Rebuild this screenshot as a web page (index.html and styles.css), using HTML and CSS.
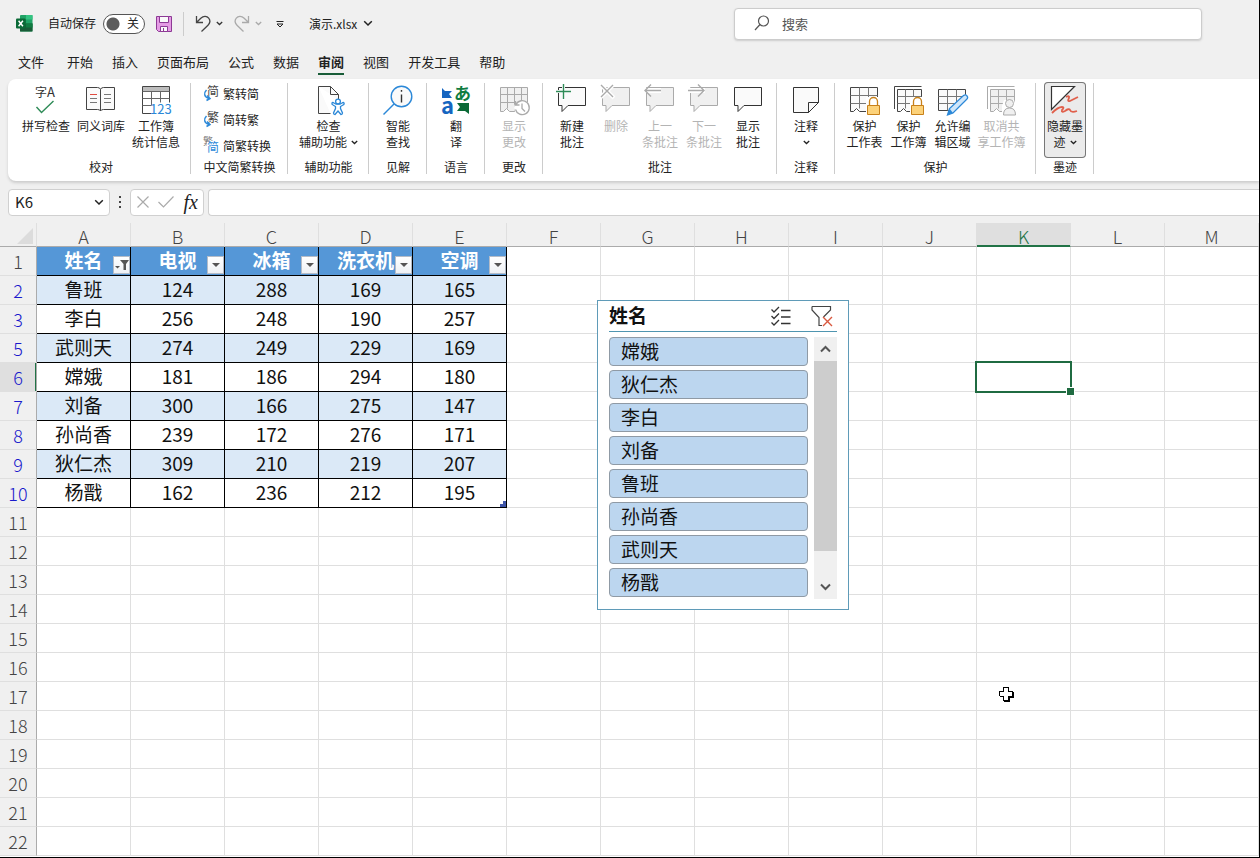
FILE: index.html
```html
<!DOCTYPE html>
<html lang="zh-CN">
<head>
<meta charset="utf-8">
<title>演示.xlsx</title>
<link rel="stylesheet" href="styles.css">
</head>
<body>
<div class="app">
  <header class="titlebar">
    <svg class="logo" width="17" height="17" viewBox="0 0 17 17">
      <rect x="4" y="0" width="12.500" height="16.500" rx="1" fill="#21a366"/><rect x="10" y="0" width="6.500" height="4.500" fill="#33c481"/><rect x="4" y="4.500" width="6" height="4" fill="#107c41"/><rect x="4" y="8.500" width="12.500" height="8" fill="#185c37"/><rect x="10" y="8.500" width="6.500" height="4" fill="#107c41"/><rect x="0" y="3.500" width="9.500" height="10" rx="1" fill="#0b6a37"/>
      <path d="M2.600 5.800l4.300 5.400M6.900 5.800l-4.300 5.400" stroke="#fff" stroke-width="1.500"/>
    </svg>
    <label class="autosave" for="autosave">自动保存</label>
    <span class="switch"><input id="autosave" type="checkbox" role="switch"><span>关</span></span>
    <button class="tool save" aria-label="保存"><svg width="16" height="16" viewBox="0 0 16 16"><path d="M.500.500h15v15H2.500l-2-2z" fill="#e59be5" stroke="#8d3a95"/><path d="M3.500.500h9v6h-9z" fill="#fafafa" stroke="#8d3a95"/><path d="M4.500 15.500v-5h7v5z" fill="#fafafa" stroke="#8d3a95"/><path d="M7.500 12v3" stroke="#8d3a95"/></svg></button>
    <i class="divider"></i>
    <button class="tool undo" aria-label="撤消"><svg width="16" height="18" viewBox="0 0 16 18" fill="none" stroke="#444" stroke-width="1.300"><path d="M1.500 1v6.500H8M1.700 7.300L5.800 3.200C8.500.700 12 1 13.700 3.200c1.800 2.300 1.300 5-.7 7L6.500 16.500"/></svg><svg width="7" height="5" viewBox="0 0 7 5" fill="none" stroke="#333" stroke-width="1.300"><path d="M.800 1l2.700 2.500L6.200 1"/></svg></button>
    <button class="tool redo" aria-label="恢复"><svg width="16" height="18" viewBox="0 0 16 18" fill="none" stroke="#aaa" stroke-width="1.300"><path d="M14.500 1v6.500H8M14.300 7.300l-4.100-4.100C7.500.700 4 1 2.300 3.200c-1.800 2.300-1.300 5 .7 7l6.500 6.300"/></svg><svg width="7" height="5" viewBox="0 0 7 5" fill="none" stroke="#aaa" stroke-width="1.300"><path d="M.800 1l2.700 2.500L6.200 1"/></svg></button>
    <button class="tool more" aria-label="自定义快速访问工具栏"><svg width="8" height="8" viewBox="0 0 8 8" fill="none" stroke="#222"><path d="M.500 1.500h7M1 4h6L4 7z"/></svg></button>
    <button class="tool filename">演示.xlsx<svg width="10" height="7" viewBox="0 0 10 7" fill="none" stroke="#222" stroke-width="1.500"><path d="M1.200 1.200L5 5l3.800-3.800"/></svg></button>
    <div class="search"><svg width="16" height="16" viewBox="0 0 16 16" fill="none" stroke="#555" stroke-width="1.200"><circle cx="9.500" cy="6" r="5"/><path d="M6 9.500L1 15"/></svg><input type="search" placeholder="搜索" aria-label="搜索"></div>
  </header>

  <nav class="tabs">
    <button class="file">文件</button><button>开始</button><button>插入</button><button>页面布局</button><button>公式</button><button>数据</button><button class="active">审阅</button><button>视图</button><button>开发工具</button><button>帮助</button>
  </nav>

  <section class="ribbon">
    <div class="group proof">
      <div class="items">
        <button class="cmd"><svg viewBox="0 0 32 32"><text x="5" y="13" font-size="12" fill="#333">字</text><text x="17" y="13" font-size="13" fill="#333">A</text><path d="M6.500 23l5 5.500L23.500 17" fill="none" stroke="#2e8b57" stroke-width="1.400"/></svg>拼写检查</button>
        <button class="cmd"><svg viewBox="0 0 32 32" fill="none" stroke="#444"><path d="M1.500 3.500h11q2.500 0 3 2 .5-2 3-2h11v22h-11q-2.500 0-3 1.500-.5-1.500-3-1.500h-11zM15.500 5.500V27" fill="#fafafa"/><path d="M5 10.500h7" stroke="#e04b40"/><path d="M5 14.500h7M5 18.500h7M19 10.500h7M19 14.500h7M19 18.500h7" stroke="#777"/></svg>同义词库</button>
        <button class="cmd"><svg viewBox="0 0 32 32" fill="none" stroke="#444"><path d="M2.500 2.500h27v16M2.500 2.500v27h9" /><path d="M3 3h26v4H3z" fill="#bdbdbd" stroke="none"/><path d="M2.500 7.500h27M2.500 14.500h27M2.500 21.500h9M11.500 7.500v14M20.500 7.500v11" stroke="#666"/><text x="10" y="30" font-size="13" fill="#2b88d8" stroke="none">123</text></svg>工作簿<br>统计信息</button>
      </div>
      <h2>校对</h2>
    </div>
    <div class="group chinese">
      <div class="items list">
        <button><svg viewBox="0 0 16 16"><text x="4" y="11" font-size="12" fill="#444">简</text><path d="M3.500 5C.500 8 1 12 6 13.500M4 10.500l3 3-3.500 2" fill="none" stroke="#2b88d8" stroke-width="1.500"/></svg>繁转简</button>
        <button><svg viewBox="0 0 16 16"><text x="4" y="11" font-size="12" fill="#444">繁</text><path d="M3.500 5C.500 8 1 12 6 13.500M4 10.500l3 3-3.500 2" fill="none" stroke="#2b88d8" stroke-width="1.500"/></svg>简转繁</button>
        <button><svg viewBox="0 0 16 16"><text x="0" y="8" font-size="10" fill="#777">繁</text><path d="M4 5h12v11H4z" fill="#fff"/><text x="4" y="15" font-size="12" fill="#2b88d8">简</text></svg>简繁转换</button>
      </div>
      <h2>中文简繁转换</h2>
    </div>
    <div class="group wide">
      <div class="items">
        <button class="cmd"><svg viewBox="0 0 32 32" fill="none" stroke="#444"><path d="M5.500 2.500h12l8 8v5M5.500 2.500v27h12" fill="#fafafa"/><path d="M17.500 2.500v8h8"/><g fill="#fff" stroke="#2b88d8" stroke-width="1.300"><path d="M19 19q.5-1 2 0l2 1h4l2-1q1.500-1 2 0 .5 1.500-1 2l-2.500 1.500v2l2 4.500q0 1.500-1.500 1.500L25 27l-3 3.500q-1.500 0-1.500-1.500l2-4.500v-2L20 21q-1.500-.5-1-2z"/><circle cx="25" cy="17.500" r="2.400"/></g></svg>检查<br><span>辅助功能<svg class="caret" viewBox="0 0 7 5"><path d="M.800 1l2.700 2.500L6.200 1"/></svg></span></button>
      </div>
      <h2>辅助功能</h2>
    </div>
    <div class="group">
      <div class="items">
        <button class="cmd"><svg viewBox="0 0 32 32" fill="none" stroke="#2b88d8" stroke-width="1.400"><circle cx="19.500" cy="12.500" r="10.300" fill="#fafafa"/><path d="M12 20L1.500 30.500"/><path d="M19.500 10.500v8M19.500 6v1.800" stroke="#333"/></svg>智能<br>查找</button>
      </div>
      <h2>见解</h2>
    </div>
    <div class="group">
      <div class="items">
        <button class="cmd"><svg viewBox="0 0 32 32"><path d="M2 4l3 3h7l-3 3 3 4H2z" fill="#1565c0"/><text x="1" y="30" font-size="22" font-weight="700" fill="#1565c0">a</text><text x="14" y="16" font-size="17" font-weight="700" fill="#107c41">あ</text><path d="M29 30l-4-3h-8l3-4-3-4h12z" fill="#0b6a37"/></svg>翻<br>译</button>
      </div>
      <h2>语言</h2>
    </div>
    <div class="group">
      <div class="items">
        <button class="cmd" disabled><svg viewBox="0 0 32 32" fill="none" stroke="#aaa"><path d="M2.500 3.500h27v24h-18l-3-3-3 3h-3z" fill="#f0f0f0"/><path d="M2.500 10.500h27M2.500 18.500h27M9.500 3.500v21M16.500 3.500v24M23.500 3.500v15"/><circle cx="24" cy="24" r="8" fill="#fff" stroke="none"/><path d="M18 20.500a7 7 0 1 1-.5 5M17.500 17v4h4M24 19.500v5l3 3" stroke-width="1.300"/></svg>显示<br>更改</button>
      </div>
      <h2>更改</h2>
    </div>
    <div class="group comments">
      <div class="items">
        <button class="cmd"><svg viewBox="0 0 32 32" fill="#fafafa" stroke="#333"><path d="M2.500 3.500h27v18H12l-6 6v-6H2.500z"/><path d="M7.500 0v16M0 7.500h15" stroke="#fff" stroke-width="3"/><path d="M7.500 0v15M0 7.500h15" stroke="#2e8b57" stroke-width="1.400"/></svg>新建<br>批注</button>
        <button class="cmd" disabled><svg viewBox="0 0 32 32" fill="#f0f0f0" stroke="#aaa"><path d="M2.500 3.500h27v18H12l-6 6v-6H2.500z"/><path d="M0 0l14 14M14 0L0 14" stroke="#fff" stroke-width="4"/><path d="M1 1l12 12M13 1L1 13" stroke-width="1.400"/></svg>删除</button>
        <button class="cmd" disabled><svg viewBox="0 0 32 32" fill="#f0f0f0" stroke="#aaa"><path d="M2.500 3.500h27v18H12l-6 6v-6H2.500z"/><path d="M0 6.500h17" stroke="#fff" stroke-width="5"/><path d="M1 6.500h16M7 .500l-6 6 6 6" fill="none" stroke-width="1.400"/></svg>上一<br>条批注</button>
        <button class="cmd" disabled><svg viewBox="0 0 32 32" fill="#f0f0f0" stroke="#aaa"><path d="M2.500 3.500h27v18H12l-6 6v-6H2.500z"/><path d="M0 6.500h17" stroke="#fff" stroke-width="5"/><path d="M0 6.500h16M10 .500l6 6-6 6" fill="none" stroke-width="1.400"/></svg>下一<br>条批注</button>
        <button class="cmd"><svg viewBox="0 0 32 32" fill="#fafafa" stroke="#333"><path d="M2.500 3.500h27v18H12l-6 6v-6H2.500z"/></svg>显示<br>批注</button>
      </div>
      <h2>批注</h2>
    </div>
    <div class="group">
      <div class="items">
        <button class="cmd"><svg viewBox="0 0 32 32" fill="#fafafa" stroke="#333"><path d="M3.500 3.500h25v15l-10 10h-15z"/><path d="M18.500 28.500v-10h10z"/></svg>注释<br><span><svg class="caret" viewBox="0 0 7 5"><path d="M.800 1l2.700 2.500L6.200 1"/></svg></span></button>
      </div>
      <h2>注释</h2>
    </div>
    <div class="group protect">
      <div class="items">
        <button class="cmd"><svg viewBox="0 0 32 32" fill="none" stroke="#444"><path d="M1.500 3.500h27v24h-18l-3-3-3 3h-3z" fill="#fafafa"/><path d="M1.500 11.500h27M1.500 19.500h27M10.500 3.500v21M19.500 3.500v24" stroke="#777"/><path d="M17 13h14v19H17z" fill="#fff" stroke="none"/><path d="M20.500 21v-3.500a4 4 0 0 1 8 0V21" stroke="#c8811a" stroke-width="1.300"/><path d="M18.500 21.500h12v9h-12z" fill="#fcd27a" stroke="#c8811a"/></svg>保护<br>工作表</button>
        <button class="cmd"><svg viewBox="0 0 32 32" fill="none" stroke="#444"><path d="M1.500 25V2.500h27"/><path d="M4.500 5.500h24v22h-15l-3-3-3 3h-3z" fill="#fafafa"/><path d="M4.500 12.500h24M4.500 19.500h24M12.500 5.500v19M20.500 5.500v22" stroke="#777"/><path d="M17 13h14v19H17z" fill="#fff" stroke="none"/><path d="M20.500 21v-3.500a4 4 0 0 1 8 0V21" stroke="#c8811a" stroke-width="1.300"/><path d="M18.500 21.500h12v9h-12z" fill="#fcd27a" stroke="#c8811a"/></svg>保护<br>工作簿</button>
        <button class="cmd"><svg viewBox="0 0 32 32" fill="none" stroke="#444"><path d="M1.500 5.500h27v21h-27z" fill="#fafafa"/><path d="M1.500 12.500h27M1.500 19.500h27M10.500 5.500v21M19.500 5.500v21" stroke="#777"/><path d="M13 32l2-8 14-13 3 3v18z" fill="#fff" stroke="none"/><path d="M10.500 31l2-6.500 14-13q2.500-1.500 3.500.5 1.500 2-.5 3.500L16 29z" fill="#cfe6fa" stroke="#2b88d8" stroke-width="1.300"/><path d="M10.500 31l2-6.500L16 29z" fill="#2b88d8" stroke="none"/></svg>允许编<br>辑区域</button>
        <button class="cmd share" disabled><svg viewBox="0 0 32 32" fill="none" stroke="#aaa"><path d="M1.500 25V2.500h27"/><path d="M4.500 5.500h24v22h-15l-3-3-3 3h-3z" fill="#f0f0f0"/><path d="M4.500 12.500h24M4.500 19.500h24M12.500 5.500v19M20.500 5.500v22"/><path d="M16 32V22l2-6h10l2 6v10z" fill="#fff" stroke="none"/><circle cx="23.500" cy="19.500" r="4" fill="#f0f0f0"/><path d="M17.500 31q0-7 6-7t6 7z" fill="#f0f0f0"/></svg>取消共<br>享工作簿</button>
      </div>
      <h2>保护</h2>
    </div>
    <div class="group">
      <div class="items">
        <button class="cmd pressed"><svg viewBox="0 0 32 32" fill="none"><path d="M2.500 2.500h23l-23 23z" fill="#fff" stroke="#333" stroke-width="1.200"/><path d="M17 13q4-2 3 1-2 4 1 3l8-4M3 29q6-6 10-6 3 0 0 3-1 3 3 1 4-3 5-1 1 3 7 1" stroke="#e0604c" stroke-width="1.800"/></svg>隐藏墨<br><span>迹<svg class="caret" viewBox="0 0 7 5"><path d="M.800 1l2.700 2.500L6.200 1"/></svg></span></button>
      </div>
      <h2>墨迹</h2>
    </div>
  </section>

  <section class="formula-bar">
    <div class="field name"><input type="text" value="K6" aria-label="名称框"><button aria-label="名称列表"><svg width="10" height="7" viewBox="0 0 10 7" fill="none" stroke="#222" stroke-width="1.500"><path d="M1.200 1.200L5 5l3.800-3.800"/></svg></button></div>
    <svg class="grip" width="4" height="12" viewBox="0 0 4 12" fill="#444"><path d="M1 0h2v2H1zM1 5h2v2H1zM1 10h2v2H1z"/></svg>
    <div class="field fx">
      <button aria-label="取消"><svg width="12" height="12" viewBox="0 0 12 12" stroke="#aaa" stroke-width="1.200"><path d="M.500.500l11 11M11.500.500l-11 11"/></svg></button>
      <button aria-label="输入"><svg width="16" height="12" viewBox="0 0 16 12" fill="none" stroke="#aaa" stroke-width="1.200"><path d="M.500 6l5 5L15.500.500"/></svg></button>
      <button class="fn" aria-label="插入函数">fx</button>
    </div>
    <input class="field formula" type="text" aria-label="编辑栏">
  </section>

  <main class="sheet">
    <table class="grid">
      <thead>
        <tr><th class="corner"><svg width="16" height="16" viewBox="0 0 16 16"><path d="M16 0v16H0z" fill="#dcdcdc"/></svg></th><th>A</th><th>B</th><th>C</th><th>D</th><th>E</th><th>F</th><th>G</th><th>H</th><th>I</th><th>J</th><th class="current">K</th><th>L</th><th>M</th></tr>
      </thead>
      <tbody>
        <tr class="head"><th>1</th>
          <td>姓名<button class="filter" aria-label="筛选姓名"><svg width="14" height="12" viewBox="0 0 14 12"><path d="M5 1h9l-3 4v6H8.500V5z" fill="#555"/><path d="M0 7h5L2.500 9.500z" fill="#555"/></svg></button></td>
          <td>电视<button class="filter" aria-label="筛选电视"><svg width="8" height="4" viewBox="0 0 8 4"><path d="M0 0h8L4 4z" fill="#555"/></svg></button></td>
          <td>冰箱<button class="filter" aria-label="筛选冰箱"><svg width="8" height="4" viewBox="0 0 8 4"><path d="M0 0h8L4 4z" fill="#555"/></svg></button></td>
          <td>洗衣机<button class="filter" aria-label="筛选洗衣机"><svg width="8" height="4" viewBox="0 0 8 4"><path d="M0 0h8L4 4z" fill="#555"/></svg></button></td>
          <td>空调<button class="filter" aria-label="筛选空调"><svg width="8" height="4" viewBox="0 0 8 4"><path d="M0 0h8L4 4z" fill="#555"/></svg></button></td>
          <td><td><td><td><td><td><td><td></tr>
        <tr class="data band"><th>2</th><td>鲁班<td>124<td>288<td>169<td>165<td><td><td><td><td><td><td><td></tr>
        <tr class="data"><th>3</th><td>李白<td>256<td>248<td>190<td>257<td><td><td><td><td><td><td><td></tr>
        <tr class="data band"><th>5</th><td>武则天<td>274<td>249<td>229<td>169<td><td><td><td><td><td><td><td></tr>
        <tr class="data"><th class="current">6</th><td>嫦娥<td>181<td>186<td>294<td>180<td><td><td><td><td><td class="selected"><td><td></tr>
        <tr class="data band"><th>7</th><td>刘备<td>300<td>166<td>275<td>147<td><td><td><td><td><td><td><td></tr>
        <tr class="data"><th>8</th><td>孙尚香<td>239<td>172<td>276<td>171<td><td><td><td><td><td><td><td></tr>
        <tr class="data band"><th>9</th><td>狄仁杰<td>309<td>210<td>219<td>207<td><td><td><td><td><td><td><td></tr>
        <tr class="data"><th>10</th><td>杨戬<td>162<td>236<td>212<td class="end">195<td><td><td><td><td><td><td><td></tr>
        <tr><th>11</th><td><td><td><td><td><td><td><td><td><td><td><td><td></tr>
        <tr><th>12</th><td><td><td><td><td><td><td><td><td><td><td><td><td></tr>
        <tr><th>13</th><td><td><td><td><td><td><td><td><td><td><td><td><td></tr>
        <tr><th>14</th><td><td><td><td><td><td><td><td><td><td><td><td><td></tr>
        <tr><th>15</th><td><td><td><td><td><td><td><td><td><td><td><td><td></tr>
        <tr><th>16</th><td><td><td><td><td><td><td><td><td><td><td><td><td></tr>
        <tr><th>17</th><td><td><td><td><td><td><td><td><td><td><td><td><td></tr>
        <tr><th>18</th><td><td><td><td><td><td><td><td><td><td><td><td><td></tr>
        <tr><th>19</th><td><td><td><td><td><td><td><td><td><td><td><td><td></tr>
        <tr><th>20</th><td><td><td><td><td><td><td><td><td><td><td><td><td></tr>
        <tr><th>21</th><td><td><td><td><td><td><td><td><td><td><td><td><td></tr>
        <tr><th>22</th><td><td><td><td><td><td><td><td><td><td><td><td><td></tr>
      </tbody>
    </table>

    <aside class="slicer">
      <div class="slicer-head">
        <h3>姓名</h3>
        <button aria-label="多选"><svg width="20" height="20" viewBox="0 0 20 20" fill="none" stroke="#333" stroke-width="1.300"><path d="M.500 3.500l2.500 2.500L8 1M.500 10l2.500 2.500L8 7.500M.500 16.500L3 19l5-5M10 4.500h9.500M10 11h9.500M10 17.500h9.500"/></svg></button>
        <button aria-label="清除筛选器"><svg width="22" height="22" viewBox="0 0 22 22" fill="none" stroke="#444" stroke-width="1.200"><path d="M1 1.500h18.500V5L12.500 12M1 1.500V5l7 7.500v8h3" /><path d="M12 12l9 9M21 12l-9 9" stroke="#d9583f" stroke-width="1.400"/></svg></button>
      </div>
      <div class="slicer-body">
        <div class="slicer-items">
          <button>嫦娥</button><button>狄仁杰</button><button>李白</button><button>刘备</button><button>鲁班</button><button>孙尚香</button><button>武则天</button><button>杨戬</button>
        </div>
        <div class="scroll">
          <button aria-label="向上滚动"><svg width="11" height="8" viewBox="0 0 11 8" fill="none" stroke="#555" stroke-width="2"><path d="M1 6.500L5.500 2 10 6.500"/></svg></button>
          <i class="thumb"></i>
          <button aria-label="向下滚动"><svg width="11" height="8" viewBox="0 0 11 8" fill="none" stroke="#555" stroke-width="2"><path d="M1 1.500L5.500 6 10 1.500"/></svg></button>
        </div>
      </div>
    </aside>
    <svg class="pointer" width="15" height="15" viewBox="0 0 15 15"><path d="M4 0h6v4h4v1h1v6h-4v4H5v-1H4v-4H1v-1H0V4h4z"/><path d="M5 1h4v4h4v4H9v4H5V9H1V5h4z" fill="#fff"/></svg>
  </main>
</div>
</body>
</html>
```

FILE: styles.css
```css
* { box-sizing: border-box; }
body {
  margin: 0;
  font-family: "Noto Sans CJK SC", "Noto Sans", sans-serif;
  font-size: 12px;
  color: #222;
  background: #f0f0f0;
}
button, input { font: inherit; color: inherit; }
button { padding: 0; border: 0; background: none; }
svg { display: block; flex: none; overflow: visible; }

.app {
  display: flex;
  flex-direction: column;
  height: 100vh;
  overflow: hidden;
  border-right: 1px solid #000;
  border-bottom: 1px solid #000;
}

/* title bar */
.titlebar {
  display: flex;
  align-items: center;
  height: 47px;
  flex: none;
  padding-left: 16px;
}
.autosave { margin-left: 15px; line-height: 16px; padding-bottom: 2px; }
.switch { position: relative; width: 42px; height: 20px; margin-left: 7px; }
.switch input {
  appearance: none;
  display: block;
  width: 100%;
  height: 100%;
  margin: 0;
  border: 1px solid #555;
  border-radius: 10px;
  background: radial-gradient(circle at 9px 9px, #5c5c5c 6px, transparent 7px) #fff;
}
.switch span { position: absolute; right: 6px; top: 1px; line-height: 16px; pointer-events: none; }
.tool { display: flex; align-items: center; flex: none; }
.save { margin-left: 11px; }
.divider { width: 1px; height: 24px; margin-left: 11px; background: #ccc; }
.undo, .redo { gap: 5px; }
.undo { margin-left: 11px; }
.redo { margin-left: 11px; }
.more { margin-left: 14px; }
.filename { margin-left: 25px; gap: 6px; white-space: nowrap; }
.search {
  display: flex;
  align-items: center;
  flex: 0 1 468px;
  height: 32px;
  margin: 0 57px 0 auto;
  padding: 0 0 1px 19px;
  gap: 10px;
  background: #fff;
  border: 1px solid #ccc;
  border-radius: 4px;
  box-shadow: 0 1px 2px #ccc;
}
.search input { flex: 1; min-width: 0; border: 0; outline: 0; background: none; font-size: 13px; }
.search input::placeholder { color: #555; opacity: 1; }

/* tabs */
.tabs { display: flex; gap: 19px; height: 32px; flex: none; padding-left: 18px; }
.tabs button { height: 28px; padding-top: 3px; font-size: 13px; line-height: 20px; border-bottom: 2px solid transparent; }
.tabs .file { margin-right: 4px; }
.tabs .active { font-weight: 700; border-color: #185c37; }

/* ribbon */
.ribbon {
  display: flex;
  flex: none;
  height: 102px;
  margin-left: 8px;
  background: #fff;
  border-radius: 8px 0 0 8px;
  box-shadow: 0 2px 3px #ccc;
}
.group { display: flex; flex-direction: column; position: relative; width: 58px; flex: none; }
.group::after {
  content: "";
  position: absolute;
  right: 0;
  top: 4px;
  bottom: 7px;
  width: 1px;
  background: #ccc;
}
.group h2 { margin: 0; font-size: 12px; font-weight: 400; line-height: 16px; text-align: center; white-space: nowrap; }
.items { display: flex; justify-content: center; align-items: flex-start; height: 80px; padding-top: 3px; }
.proof { width: 183px; padding-left: 3px; }
.chinese { width: 97px; }
.wide { width: 81px; }
.comments { width: 234px; }
.protect { width: 201px; }
.cmd {
  display: block;
  width: 44px;
  padding: 2px 0 8px;
  line-height: 16px;
  text-align: center;
  white-space: nowrap;
}
.cmd > svg { width: 32px; height: 32px; margin: 0 auto 2px; }
.cmd:disabled { color: #b4b4b4; }
.cmd span { display: inline-flex; align-items: center; gap: 4px; height: 16px; vertical-align: top; }
.proof .cmd { width: 55px; }
.wide .cmd { width: 64px; }
.cmd.share { width: 54px; }
.caret { width: 7px; height: 5px; fill: none; stroke: #222; stroke-width: 1.3; }
.cmd.pressed { width: 42px; background: #ebebeb; border-radius: 4px; box-shadow: inset 0 0 0 1px #777; }
.list { flex-direction: column; justify-content: flex-start; padding: 1px 0 0 12px; }
.list button { display: flex; align-items: center; gap: 4px; height: 26px; white-space: nowrap; }
.list svg { width: 16px; height: 16px; }

/* formula bar */
.formula-bar { display: flex; align-items: center; flex: none; height: 42px; padding: 0 0 0 8px; }
.field { height: 27px; background: #fff; border: 1px solid #d0d0d0; border-radius: 4px; }
.name { display: flex; align-items: center; width: 102px; padding: 0 5px 0 6px; }
.name input { flex: 1; min-width: 0; padding: 0; border: 0; outline: 0; font-size: 15px; line-height: 20px; }
.grip { margin: 0 8px; }
.fx { display: flex; align-items: center; justify-content: space-between; width: 74px; padding: 0 5px 0 6px; }
.fn { font: italic 400 20px "Liberation Serif", serif; color: #222; }
.formula { flex: 1; min-width: 0; margin-left: 4px; border-right: 0; border-radius: 4px 0 0 4px; }

/* sheet */
.sheet { position: relative; flex: 1; min-height: 0; background: #fff; }
.grid { width: 100%; table-layout: fixed; border-collapse: separate; border-spacing: 0; font-size: 19px; }
.grid th, .grid td {
  height: 29px;
  padding: 0;
  border-right: 1px solid #dfdfdf;
  border-bottom: 1px solid #dfdfdf;
  line-height: 26px;
  text-align: center;
  white-space: nowrap;
}
.grid th { font-size: 18px; font-weight: 300; color: #444; background: #f0f0f0; }
.grid td { position: relative; padding-bottom: 2px; color: #111; }
.grid thead th { height: 24px; padding-top: 2px; line-height: 20px; border-bottom-color: #ababab; }
.grid thead .corner { width: 37px; }
.corner svg { margin-left: 17px; }
.grid tbody th { border-right-color: #ababab; }
.grid thead .current {
  color: #217346;
  background: #dfdfdf;
  border-bottom-color: #217346;
  box-shadow: inset 0 -1px #217346;
}
.grid .data th { color: #1a1acc; }
.grid .data .current { background: #dfdfdf; box-shadow: inset -1px 0 #217346; }
.head td:nth-child(-n+6), .data td:nth-child(-n+6) { border-color: #000; }
.head td:nth-child(-n+6) { background: #5597d7; color: #fff; font-weight: 700; }
.band td:nth-child(-n+6) { background: #dbe9f7; }
.filter {
  position: absolute;
  right: 0;
  bottom: 1px;
  display: flex;
  align-items: center;
  justify-content: center;
  width: 17px;
  height: 18px;
  background: linear-gradient(#fff, #eef1f5);
  border: 1px solid #b4bcc8;
}
.end::after {
  content: "";
  position: absolute;
  right: 0;
  bottom: 0;
  width: 6px;
  height: 6px;
  background: #3f55a8;
  clip-path: polygon(50% 0, 100% 0, 100% 100%, 0 100%, 0 50%, 50% 50%);
}
.selected::before { content: ""; position: absolute; inset: -2px; z-index: 1; border: 2px solid #1f6b41; }
.selected::after {
  content: "";
  position: absolute;
  right: -5px;
  bottom: -5px;
  z-index: 2;
  width: 7px;
  height: 7px;
  background: #1f6b41;
  border: 1px solid #fff;
}

/* slicer */
.slicer {
  position: absolute;
  left: 597px;
  top: 77px;
  z-index: 3;
  width: 252px;
  padding: 0 11px 10px;
  background: #fff;
  border: 1px solid #5f9bb8;
}
.slicer-head { display: flex; align-items: center; height: 31px; border-bottom: 1px solid #4f95b0; }
.slicer-head h3 { flex: 1; margin: 0; padding-bottom: 3px; font-size: 19px; font-weight: 700; line-height: 26px; color: #111; }
.slicer-head button { margin-right: 4px; }
.slicer-head button:nth-child(2) { margin-right: 20px; }
.slicer-body { display: flex; gap: 6px; height: 267px; padding-top: 5px; }
.slicer-items { display: flex; flex-direction: column; flex: 1; gap: 4px; }
.slicer-items button {
  flex: none;
  height: 29px;
  padding: 0 0 2px 11px;
  background: #bcd6ef;
  border: 1px solid #8f9aa5;
  border-radius: 4px;
  font-size: 19px;
  line-height: 24px;
  text-align: left;
  color: #111;
}
.scroll { display: flex; flex-direction: column; width: 23px; background: #f0f0f0; }
.scroll button { display: flex; align-items: center; justify-content: center; height: 24px; }
.thumb { height: 190px; margin-bottom: auto; background: #cdcdcd; }

.pointer { position: absolute; left: 999px; top: 464px; z-index: 4; }
```
